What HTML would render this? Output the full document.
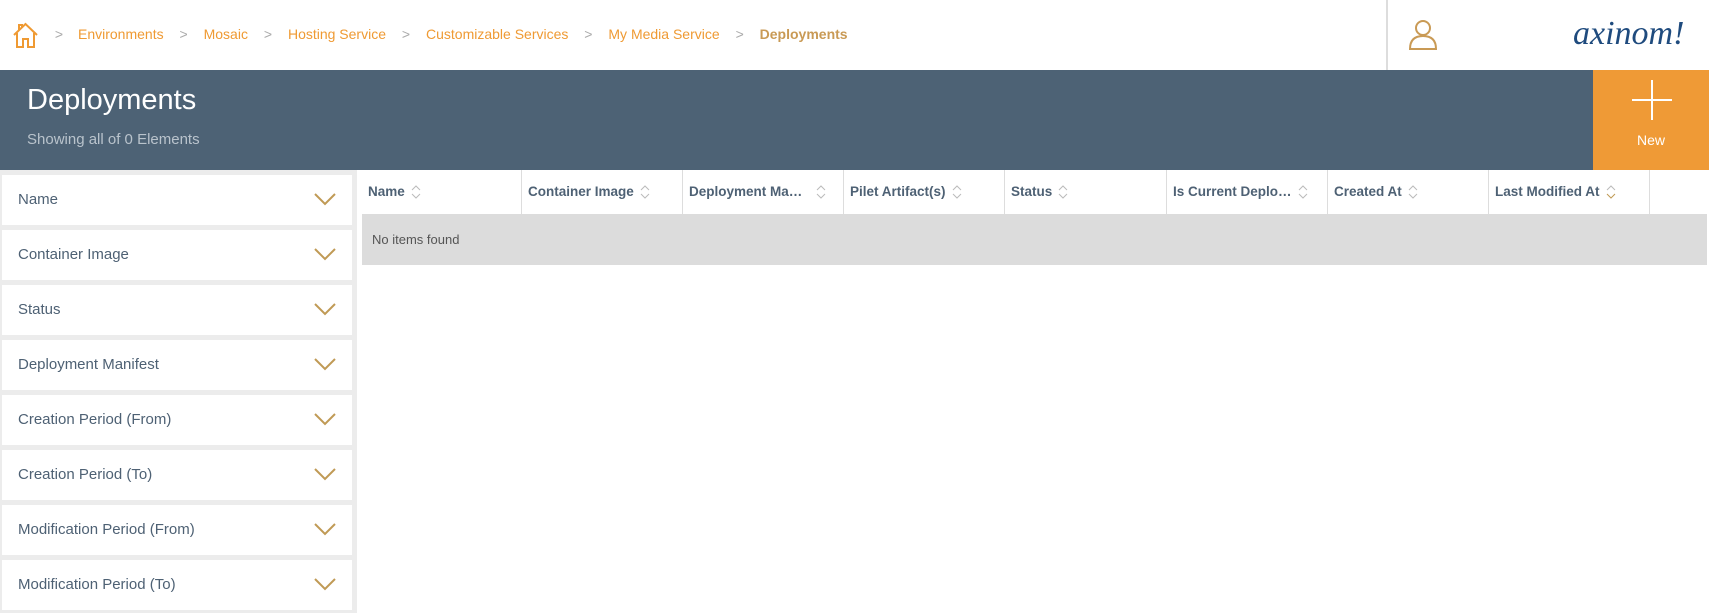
<!DOCTYPE html>
<html><head><meta charset="utf-8"><style>
*{margin:0;padding:0;box-sizing:border-box}
body{width:1709px;height:613px;overflow:hidden;background:#fff;font-family:"Liberation Sans",Arial,sans-serif;position:relative}
.hdr{position:absolute;left:0;top:0;width:1709px;height:70px;background:#fff}
.bc{position:absolute;top:26px;left:78px;font-size:14px;color:#ef9a33;white-space:nowrap}
.sep{display:inline-block;width:40px;text-align:center;color:#aaa}
.vline{position:absolute;left:1386px;top:0;width:2px;height:70px;background:#ddd}
.logo{position:absolute;left:1573px;top:15px;font-family:"Liberation Serif",serif;font-style:italic;font-size:34px;color:#1f4b7e;letter-spacing:0px}
.band{position:absolute;left:0;top:70px;width:1709px;height:100px;background:#4d6275}
.band h1{position:absolute;left:27px;top:14px;font-weight:normal;font-size:29px;color:#fff}
.band p{position:absolute;left:27px;top:61px;font-size:15px;color:#b9c3cc}
.new{position:absolute;left:1593px;top:70px;width:116px;height:100px;background:#ef9a36;color:#fff;font-size:14px;text-align:center}
.side{position:absolute;left:0;top:170px;width:357px;height:443px;background:#ececec}
.f{position:absolute;left:2px;width:350px;height:50px;background:#fff;color:#4e6174;font-size:15px;padding-left:16px;line-height:50px}
.f svg{position:absolute;right:16px;top:18px}
.tbl{position:absolute;left:362px;top:170px;width:1347px}
.th{position:absolute;top:0;height:44px;border-right:1px solid #ddd;font-weight:bold;font-size:13.5px;color:#4e6174;line-height:44px;padding-left:6px;white-space:nowrap}
.th svg{vertical-align:middle;margin-left:6px}
.row{position:absolute;left:362px;top:214px;width:1345px;height:51px;background:#dcdcdc;font-size:13px;color:#555;line-height:51px;padding-left:10px}
</style></head><body>
<div class="hdr">
<svg style="position:absolute;left:12px;top:22px" width="27" height="26" viewBox="0 0 27 26" fill="none" stroke="#ef9a33" stroke-width="2"><path d="M2 13 L13.5 2 L25 13"/><path d="M5 11 V25 H11 V17 H16 V25 H22 V11"/><path d="M7 8 V3 H10 V5"/></svg>
<div class="bc"><span>Environments</span><span class="sep">&gt;</span><span>Mosaic</span><span class="sep">&gt;</span><span>Hosting Service</span><span class="sep">&gt;</span><span>Customizable Services</span><span class="sep">&gt;</span><span>My Media Service</span><span class="sep">&gt;</span><b style="color:#c99a55">Deployments</b></div>
<div style="position:absolute;left:40px;top:26px;font-size:14px;color:#aaa;width:38px;text-align:center">&gt;</div>
<div class="vline"></div>
<svg style="position:absolute;left:1409px;top:19px" width="28" height="32" viewBox="0 0 28 32" fill="none" stroke="#c99a55" stroke-width="2"><circle cx="14" cy="9" r="7"/><path d="M1 30 Q1 17 14 17 Q27 17 27 30 Z"/></svg>
<div class="logo">axinom!</div>
</div>
<div class="band"><h1>Deployments</h1><p>Showing all of 0 Elements</p></div>
<div class="new"><svg style="position:absolute;left:39px;top:10px" width="40" height="40"><path d="M20 0V40M0 20H40" stroke="#fff" stroke-width="2"/></svg><div style="position:absolute;top:62px;width:100%">New</div></div>
<div class="side">
<div class="f" style="top:5px">Name<svg width="22" height="13"><path d="M1 1L11 11L21 1" stroke="#c09a55" stroke-width="2" fill="none"/></svg></div>
<div class="f" style="top:60px">Container Image<svg width="22" height="13"><path d="M1 1L11 11L21 1" stroke="#c09a55" stroke-width="2" fill="none"/></svg></div>
<div class="f" style="top:115px">Status<svg width="22" height="13"><path d="M1 1L11 11L21 1" stroke="#c09a55" stroke-width="2" fill="none"/></svg></div>
<div class="f" style="top:170px">Deployment Manifest<svg width="22" height="13"><path d="M1 1L11 11L21 1" stroke="#c09a55" stroke-width="2" fill="none"/></svg></div>
<div class="f" style="top:225px">Creation Period (From)<svg width="22" height="13"><path d="M1 1L11 11L21 1" stroke="#c09a55" stroke-width="2" fill="none"/></svg></div>
<div class="f" style="top:280px">Creation Period (To)<svg width="22" height="13"><path d="M1 1L11 11L21 1" stroke="#c09a55" stroke-width="2" fill="none"/></svg></div>
<div class="f" style="top:335px">Modification Period (From)<svg width="22" height="13"><path d="M1 1L11 11L21 1" stroke="#c09a55" stroke-width="2" fill="none"/></svg></div>
<div class="f" style="top:390px">Modification Period (To)<svg width="22" height="13"><path d="M1 1L11 11L21 1" stroke="#c09a55" stroke-width="2" fill="none"/></svg></div>
</div>
<div class="tbl">
<div class="th" style="left:0;width:160px">Name<svg width="10" height="16"><path d="M1 6L5 2L9 6M1 10L5 14L9 10" stroke="#bbb" fill="none"/></svg></div>
<div class="th" style="left:160px;width:161px">Container Image<svg width="10" height="16"><path d="M1 6L5 2L9 6M1 10L5 14L9 10" stroke="#bbb" fill="none"/></svg></div>
<div class="th" style="left:321px;width:161px">Deployment Ma…<svg style="margin-left:14px" width="10" height="16"><path d="M1 6L5 2L9 6M1 10L5 14L9 10" stroke="#bbb" fill="none"/></svg></div>
<div class="th" style="left:482px;width:161px">Pilet Artifact(s)<svg width="10" height="16"><path d="M1 6L5 2L9 6M1 10L5 14L9 10" stroke="#bbb" fill="none"/></svg></div>
<div class="th" style="left:643px;width:162px">Status<svg width="10" height="16"><path d="M1 6L5 2L9 6M1 10L5 14L9 10" stroke="#bbb" fill="none"/></svg></div>
<div class="th" style="left:805px;width:161px">Is Current Deplo…<svg width="10" height="16"><path d="M1 6L5 2L9 6M1 10L5 14L9 10" stroke="#bbb" fill="none"/></svg></div>
<div class="th" style="left:966px;width:161px">Created At<svg width="10" height="16"><path d="M1 6L5 2L9 6M1 10L5 14L9 10" stroke="#bbb" fill="none"/></svg></div>
<div class="th" style="left:1127px;width:161px">Last Modified At<svg width="10" height="16"><path d="M1 6L5 2L9 6" stroke="#bbb" fill="none"/><path d="M1 10L5 14L9 10" stroke="#c09a55" fill="none"/></svg></div>
</div>
<div class="row">No items found</div>
</body></html>
